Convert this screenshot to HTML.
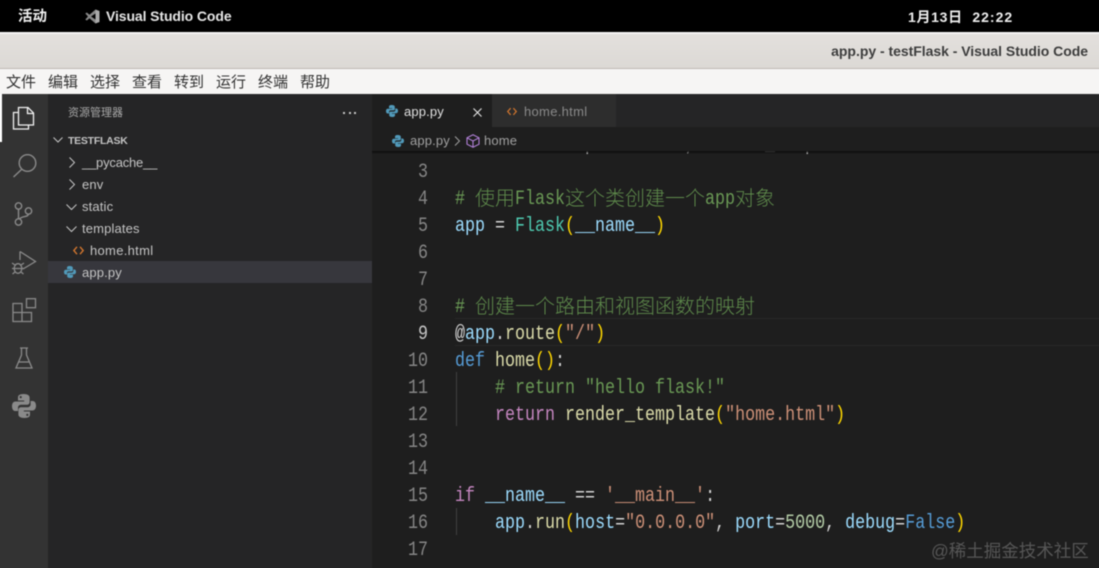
<!DOCTYPE html>
<html><head><meta charset="utf-8">
<style>
*{box-sizing:border-box}
html{margin:0;padding:0;width:1099px;height:568px;overflow:hidden}
body{margin:0;padding:0;width:1099px;height:568px;overflow:hidden;position:relative;background:#1e1e1e;font-family:"Liberation Sans","Noto Sans CJK SC",sans-serif}
#w{position:absolute;left:0;top:0;width:1099px;height:568px;filter:blur(.4px)}
.a{position:absolute;white-space:pre}
.code{position:absolute;left:455px;height:27px;font:20px/27px "Liberation Mono",monospace;white-space:pre;color:#d4d4d4;transform:scaleX(.8333);transform-origin:0 0}
.cj{position:absolute;height:27px;font:20px/27px "Noto Sans CJK SC",sans-serif;font-weight:300;white-space:pre;color:#5f8c4c}
.n{position:absolute;left:380px;width:48px;text-align:right;font:20px/27px "Liberation Mono",monospace;color:#858585;transform:scaleX(.8333);transform-origin:100% 0}
.tree{position:absolute;font-size:13px;line-height:22px;color:#c4c4c4;white-space:pre;letter-spacing:.15px}
.c{color:#6a9955}.v{color:#9cdcfe}.f{color:#dcdcaa}.k{color:#4ec9b0}.b{color:#569cd6}.p{color:#c586c0}.s{color:#ce9178}.g{color:#ffd700}.m{color:#b5cea8}
svg{position:absolute;overflow:visible}
</style></head><body><div id="w">
<!-- top bar -->
<div class="a" style="left:-6px;top:-6px;width:1111px;height:38px;background:#000"></div>
<div class="a" style="left:18px;top:7px;font-size:14.5px;line-height:21px;color:#f0f0f0;font-weight:bold">活动</div>
<svg style="left:85px;top:9px" width="15" height="15" viewBox="0 0 15 15"><path d="M10.5 0.5L14.5 2V13L10.5 14.5V0.5Z" fill="#aaa"/><path d="M10.5 0.5V4.5L6 7.5L10.5 10.5V14.5L4.5 9.3L1.8 11.5L0.3 10.5L3 7.5L0.3 4.5L1.8 3.5L4.5 5.7Z" fill="#888"/></svg>
<div class="a" style="left:106px;top:6px;font-size:14px;line-height:20px;color:#e6e6e6;font-weight:bold;letter-spacing:-.1px">Visual Studio Code</div>
<div class="a" style="left:908px;top:7px;font-size:14px;line-height:21px;color:#eee;font-weight:bold;letter-spacing:.7px">1月13日 <span style="letter-spacing:1px"> 22:22</span></div>
<!-- title bar -->
<div class="a" style="left:-6px;top:32px;width:1111px;height:2px;background:#f6f5f4"></div>
<div class="a" style="left:-6px;top:34px;width:1111px;height:35px;background:linear-gradient(#e3e0dd,#dcd9d5);border-bottom:1px solid #bdb9b4"></div>
<div class="a" style="right:11px;top:41px;font-size:14px;line-height:20px;color:#3d3d3d;font-weight:bold;letter-spacing:-.03px">app.py - testFlask - Visual Studio Code</div>
<!-- menu -->
<div class="a" style="left:-6px;top:69px;width:1111px;height:25px;background:#f6f5f4"></div>
<div class="a" style="left:6px;top:73px;font-size:15px;line-height:20px;color:#333">文件</div>
<div class="a" style="left:48px;top:73px;font-size:15px;line-height:20px;color:#333">编辑</div>
<div class="a" style="left:90px;top:73px;font-size:15px;line-height:20px;color:#333">选择</div>
<div class="a" style="left:132px;top:73px;font-size:15px;line-height:20px;color:#333">查看</div>
<div class="a" style="left:174px;top:73px;font-size:15px;line-height:20px;color:#333">转到</div>
<div class="a" style="left:216px;top:73px;font-size:15px;line-height:20px;color:#333">运行</div>
<div class="a" style="left:258px;top:73px;font-size:15px;line-height:20px;color:#333">终端</div>
<div class="a" style="left:300px;top:73px;font-size:15px;line-height:20px;color:#333">帮助</div>
<!-- activity bar -->
<div class="a" style="left:-6px;top:94px;width:54px;height:480px;background:#333333"></div>
<div class="a" style="left:-6px;top:94px;width:8px;height:48px;background:#fff"></div>
<svg style="left:12px;top:105px" width="24" height="26" viewBox="0 0 24 26" fill="none" stroke="#f2f2f2" stroke-width="1.3"><path d="M6.5 2.5H16L21.5 8V20H6.5Z"/><path d="M15.5 2.5V8.5H21.5"/><path d="M6.5 7.5H1.5V24H16.5V20"/></svg>
<svg style="left:12px;top:153px" width="25" height="26" viewBox="0 0 25 26" fill="none" stroke="#8a8a8a" stroke-width="1.4"><circle cx="15.5" cy="10" r="8.3"/><path d="M9.5 16.5L1.5 24"/></svg>
<svg style="left:14px;top:201px" width="20" height="27" viewBox="0 0 20 27" fill="none" stroke="#8a8a8a" stroke-width="1.4"><circle cx="4.5" cy="5" r="3.2"/><circle cx="4.5" cy="21" r="3.2"/><circle cx="14.5" cy="10" r="3.2"/><path d="M4.5 8.2V17.8M5.5 18C8 14.5 14 16.5 14.5 13.2"/></svg>
<svg style="left:11px;top:250px" width="26" height="26" viewBox="0 0 26 26" fill="none" stroke="#8a8a8a" stroke-width="1.3"><path d="M9 1.5L24.5 11.5L12 19"/><path d="M9 1.5V10"/><ellipse cx="7" cy="18.5" rx="3.8" ry="4.8"/><path d="M1 13L4 15M13 13L10 15M1 18.5H3M11 18.5H13M1.5 24L4 22M12.5 24L10 22M3.5 18.5H10.5"/></svg>
<svg style="left:12px;top:298px" width="25" height="25" viewBox="0 0 25 25" fill="none" stroke="#8a8a8a" stroke-width="1.3"><rect x="14.5" y="0.7" width="9" height="9"/><path d="M1 5.5H10V14.5H19.5V23.5H1ZM1 14.5H10V23.5"/></svg>
<svg style="left:15px;top:347px" width="18" height="22" viewBox="0 0 18 22" fill="none" stroke="#8a8a8a" stroke-width="1.3"><path d="M5 1H13M6.5 1V8L1 21H17L11.5 8V1"/><path d="M3.5 15H14.5"/></svg>
<svg style="left:12px;top:394px" width="24" height="24" viewBox="0 0 24 24" fill="#8a8a8a"><path d="M11.8 0C6.5 0 6 2 6 3.5V6.5H12.2V7.5H3.5C1.2 7.5 0 9.5 0 12.2C0 15 1.2 17 3.5 17H6V13.8C6 11.8 7.5 10.8 9.2 10.8H15C16.5 10.8 17.6 9.7 17.6 8V3.5C17.6 1.5 15.5 0 11.8 0ZM8.7 2A1.1 1.1 0 1 1 8.7 4.2A1.1 1.1 0 0 1 8.7 2Z"/><path d="M12.2 24C17.5 24 18 22 18 20.5V17.5H11.8V16.5H20.5C22.8 16.5 24 14.5 24 11.8C24 9 22.8 7 20.5 7H18.6V10.2C18.6 12.2 17 13.2 15.3 13.2H9C7.5 13.2 6.4 14.3 6.4 16V20.5C6.4 22.5 8.5 24 12.2 24ZM15.3 22A1.1 1.1 0 1 1 15.3 19.8A1.1 1.1 0 0 1 15.3 22Z"/></svg>
<!-- sidebar -->
<div class="a" style="left:48px;top:94px;width:324px;height:480px;background:#252526"></div>
<div class="a" style="left:68px;top:105px;font-size:11px;line-height:17px;color:#a8a8a8">资源管理器</div>
<div class="a" style="left:343px;top:112px;width:2px;height:2px;background:#c5c5c5"></div>
<div class="a" style="left:349px;top:112px;width:2px;height:2px;background:#c5c5c5"></div>
<div class="a" style="left:354px;top:112px;width:2px;height:2px;background:#c5c5c5"></div>
<svg style="left:53px;top:136px" width="10" height="8" viewBox="0 0 10 8" fill="none" stroke="#c5c5c5"><path d="M0.5 1.5L5 6L9.5 1.5"/></svg>
<div class="tree" style="left:68px;top:130px;font-size:10.5px;font-weight:bold;letter-spacing:-.25px;color:#c4c4c4">TESTFLASK</div>
<svg style="left:68px;top:157px" width="8" height="11" viewBox="0 0 8 11" fill="none" stroke="#c5c5c5"><path d="M1.5 0.5L6.5 5.5L1.5 10.5"/></svg>
<div class="tree" style="left:82px;top:152px;letter-spacing:-.2px">__pycache__</div>
<svg style="left:68px;top:179px" width="8" height="11" viewBox="0 0 8 11" fill="none" stroke="#c5c5c5"><path d="M1.5 0.5L6.5 5.5L1.5 10.5"/></svg>
<div class="tree" style="left:82px;top:174px">env</div>
<svg style="left:66px;top:203px" width="11" height="8" viewBox="0 0 11 8" fill="none" stroke="#c5c5c5"><path d="M0.5 1.5L5.5 6.5L10.5 1.5"/></svg>
<div class="tree" style="left:82px;top:196px">static</div>
<svg style="left:66px;top:225px" width="11" height="8" viewBox="0 0 11 8" fill="none" stroke="#c5c5c5"><path d="M0.5 1.5L5.5 6.5L10.5 1.5"/></svg>
<div class="tree" style="left:82px;top:218px">templates</div>
<svg style="left:73px;top:246px" width="11" height="9" viewBox="0 0 11 9" fill="none" stroke="#d0752e" stroke-width="1.4"><path d="M4 0.8L0.8 4.5L4 8.2M7 0.8L10.2 4.5L7 8.2"/></svg>
<div class="tree" style="left:90px;top:240px;letter-spacing:.3px">home.html</div>
<div class="a" style="left:48px;top:261px;width:324px;height:22px;background:#37373d"></div>
<svg style="left:64px;top:266px" width="12" height="12" viewBox="0 0 24 24" fill="#519aba"><path d="M11.8 0C6.5 0 6 2 6 3.5V6.5H12.2V7.5H3.5C1.2 7.5 0 9.5 0 12.2C0 15 1.2 17 3.5 17H6V13.8C6 11.8 7.5 10.8 9.2 10.8H15C16.5 10.8 17.6 9.7 17.6 8V3.5C17.6 1.5 15.5 0 11.8 0Z"/><path d="M12.2 24C17.5 24 18 22 18 20.5V17.5H11.8V16.5H20.5C22.8 16.5 24 14.5 24 11.8C24 9 22.8 7 20.5 7H18.6V10.2C18.6 12.2 17 13.2 15.3 13.2H9C7.5 13.2 6.4 14.3 6.4 16V20.5C6.4 22.5 8.5 24 12.2 24Z"/></svg>
<div class="tree" style="left:82px;top:262px">app.py</div>
<!-- tabs -->
<div class="a" style="left:372px;top:94px;width:733px;height:33px;background:#252526"></div>
<div class="a" style="left:372px;top:94px;width:120px;height:33px;background:#1e1e1e"></div>
<div class="a" style="left:492px;top:94px;width:124px;height:33px;background:#2d2d2d"></div>
<svg style="left:386px;top:105px" width="12" height="12" viewBox="0 0 24 24" fill="#519aba"><path d="M11.8 0C6.5 0 6 2 6 3.5V6.5H12.2V7.5H3.5C1.2 7.5 0 9.5 0 12.2C0 15 1.2 17 3.5 17H6V13.8C6 11.8 7.5 10.8 9.2 10.8H15C16.5 10.8 17.6 9.7 17.6 8V3.5C17.6 1.5 15.5 0 11.8 0Z"/><path d="M12.2 24C17.5 24 18 22 18 20.5V17.5H11.8V16.5H20.5C22.8 16.5 24 14.5 24 11.8C24 9 22.8 7 20.5 7H18.6V10.2C18.6 12.2 17 13.2 15.3 13.2H9C7.5 13.2 6.4 14.3 6.4 16V20.5C6.4 22.5 8.5 24 12.2 24Z"/></svg>
<div class="tree" style="left:404px;top:101px;color:#e0e0e0">app.py</div>
<svg style="left:473px;top:108px" width="9" height="9" viewBox="0 0 9 9" fill="none" stroke="#e5e5e5" stroke-width="1.1"><path d="M0.5 0.5L8.5 8.5M8.5 0.5L0.5 8.5"/></svg>
<svg style="left:507px;top:107px" width="10" height="9" viewBox="0 0 11 9" fill="none" stroke="#d0752e" stroke-width="1.4"><path d="M4 0.8L0.8 4.5L4 8.2M7 0.8L10.2 4.5L7 8.2"/></svg>
<div class="tree" style="left:524px;top:101px;color:#8a8a8a;letter-spacing:.3px">home.html</div>
<!-- breadcrumb -->
<div class="a" style="left:372px;top:127px;width:733px;height:24px;background:#1e1e1e"></div>
<svg style="left:392px;top:135px" width="12" height="12" viewBox="0 0 24 24" fill="#519aba"><path d="M11.8 0C6.5 0 6 2 6 3.5V6.5H12.2V7.5H3.5C1.2 7.5 0 9.5 0 12.2C0 15 1.2 17 3.5 17H6V13.8C6 11.8 7.5 10.8 9.2 10.8H15C16.5 10.8 17.6 9.7 17.6 8V3.5C17.6 1.5 15.5 0 11.8 0Z"/><path d="M12.2 24C17.5 24 18 22 18 20.5V17.5H11.8V16.5H20.5C22.8 16.5 24 14.5 24 11.8C24 9 22.8 7 20.5 7H18.6V10.2C18.6 12.2 17 13.2 15.3 13.2H9C7.5 13.2 6.4 14.3 6.4 16V20.5C6.4 22.5 8.5 24 12.2 24Z"/></svg>
<div class="tree" style="left:410px;top:130px;color:#a0a0a0">app.py</div>
<svg style="left:454px;top:136px" width="7" height="10" viewBox="0 0 7 10" fill="none" stroke="#a0a0a0"><path d="M1 0.5L5.5 5L1 9.5"/></svg>
<svg style="left:466px;top:134px" width="14" height="14" viewBox="0 0 14 14" fill="none" stroke="#b180d7" stroke-width="1.1"><path d="M7 0.7L13 3.8V10.2L7 13.3L1 10.2V3.8ZM1 3.8L7 7L13 3.8M7 7V13.3"/></svg>
<div class="tree" style="left:484px;top:130px;color:#a0a0a0">home</div>
<!-- editor -->
<div style="position:absolute;left:372px;top:151px;width:733px;height:423px;overflow:hidden;background:#1e1e1e">
<div style="position:absolute;left:-372px;top:-151px;width:1105px;height:574px">
<div class="code" style="top:132px">from flask import Flask, render_template</div>
<div class="a" style="left:455px;top:318px;width:650px;height:28px;border-top:1px solid #282828;border-bottom:1px solid #282828"></div>
<div class="a" style="left:456px;top:372px;width:1px;height:54px;background:#404040"></div>
<div class="a" style="left:456px;top:508px;width:1px;height:27px;background:#404040"></div>
<div class="n" style="top:159px">3</div>
<div class="n" style="top:186px">4</div>
<div class="n" style="top:213px">5</div>
<div class="n" style="top:240px">6</div>
<div class="n" style="top:267px">7</div>
<div class="n" style="top:294px">8</div>
<div class="n" style="top:321px;color:#c6c6c6">9</div>
<div class="n" style="top:348px">10</div>
<div class="n" style="top:375px">11</div>
<div class="n" style="top:402px">12</div>
<div class="n" style="top:429px">13</div>
<div class="n" style="top:456px">14</div>
<div class="n" style="top:483px">15</div>
<div class="n" style="top:510px">16</div>
<div class="n" style="top:537px">17</div>
<div class="code c" style="top:186px">#</div>
<div class="cj" style="left:475px;top:183px">使用</div>
<div class="code c" style="left:515px;top:186px">Flask</div>
<div class="cj" style="left:565px;top:183px">这个类创建一个</div>
<div class="code c" style="left:705px;top:186px">app</div>
<div class="cj" style="left:735px;top:183px">对象</div>
<div class="code" style="top:213px"><span class="v">app</span> = <span class="k">Flask</span><span class="g">(</span><span class="v">__name__</span><span class="g">)</span></div>
<div class="code c" style="top:294px">#</div>
<div class="cj" style="left:475px;top:291px">创建一个路由和视图函数的映射</div>
<div class="code" style="top:321px">@<span class="v">app</span>.<span class="f">route</span><span class="g">(</span><span class="s">"/"</span><span class="g">)</span></div>
<div class="code" style="top:348px"><span class="b">def</span> <span class="f">home</span><span class="g">()</span>:</div>
<div class="code c" style="top:375px">    # return "hello flask!"</div>
<div class="code" style="top:402px">    <span class="p">return</span> <span class="f">render_template</span><span class="g">(</span><span class="s">"home.html"</span><span class="g">)</span></div>
<div class="code" style="top:483px"><span class="p">if</span> <span class="v">__name__</span> == <span class="s">'__main__'</span>:</div>
<div class="code" style="top:510px">    <span class="v">app</span>.<span class="f">run</span><span class="g">(</span><span class="v">host</span>=<span class="s">"0.0.0.0"</span>, <span class="v">port</span>=<span class="m">5000</span>, <span class="v">debug</span>=<span class="b">False</span><span class="g">)</span></div>
</div></div>
<div class="a" style="left:372px;top:151px;width:733px;height:3px;background:linear-gradient(#0c0c0c,rgba(12,12,12,0))"></div>
<!-- watermark -->
<div class="a" style="left:931px;top:540px;font-size:17.5px;line-height:22px;color:#565656">@稀土掘金技术社区</div>
</div></body></html>
